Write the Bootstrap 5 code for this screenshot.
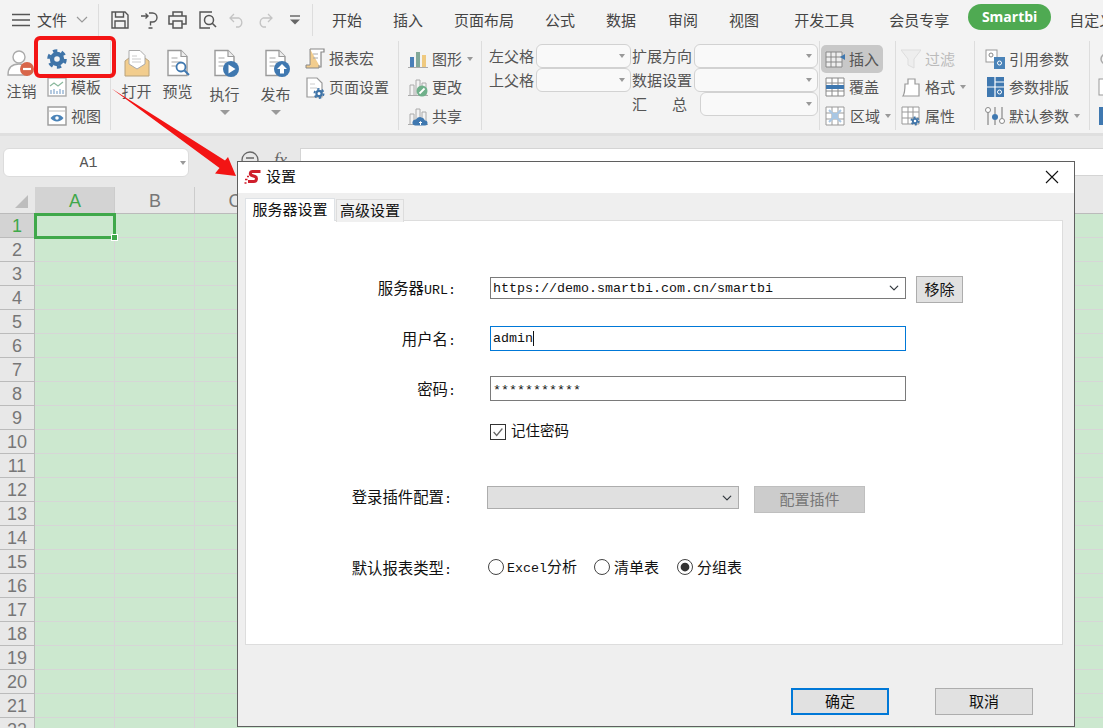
<!DOCTYPE html>
<html lang="zh-CN">
<head>
<meta charset="UTF-8" />
<title>Smartbi 设置</title>
<link rel="stylesheet" href="https://cdn.jsdelivr.net/npm/bootstrap@5.3.3/dist/css/bootstrap.min.css">
<style>
body { margin: 0; background: #e8e8e8; font-family: "Noto Sans CJK SC", "Liberation Sans", sans-serif; font-size: 15px; color: #555; }
.app { width: 1103px; height: 728px; overflow: hidden; position: relative; }
svg { display: block; flex: none; }

/* top tabs */
.topbar { height: 40px; background: #f3f3f3; white-space: nowrap; }
.menu-ico { margin-left: 12px; }
.file-lbl { margin-left: 7px; color: #444; }
.file-arrow { margin: 0 10px 0 9px; }
.vline { width: 1px; height: 32px; background: #ddd; flex: none; }
.qa { margin-left: 12px; margin-right: 12px; }
.q1 { margin-right: 11px; }
.q2 { margin-right: 10px; }
.q3 { margin-right: 11px; }
.q4 { margin-right: 12px; }
.q5 { margin-right: 12px; }
.q6 { margin-right: 17px; }
.tabitem { color: #444; flex: none; line-height: 40px; margin-left: 31px; }
.tabitem.t-first { margin-left: 19px; }
.tabitem.t-32 { margin-left: 32px; }
.tabitem.t-35 { margin-left: 35px; }
.tabitem.t-last { margin-left: 18px; }
.pill { width: 83px; height: 26px; border-radius: 13px; background: #4faa52; color: #fff; font-weight: 700; font-size: 14px; font-family: "Open Sans", sans-serif; display: flex; align-items: center; justify-content: center; flex: none; margin-left: 19px; margin-top: -7px; }

/* ribbon */
.ribbon { height: 93px; background: #f3f3f3; }
.strip { height: 3px; background: #dfdfdf; }
.rgroup { height: 89px; margin-top: 1px; border-right: 1px solid #ddd; flex: none; display: flex; }
.g-user { width: 111px; }
.g-file { width: 288px; }
.g-chart { width: 83px; padding-left: 9px; }
.g-form { width: 338px; padding: 3px 0 0 7px; }
.g-cell { width: 76px; padding-left: 5px; }
.g-fmt { width: 79px; padding-left: 5px; }
.g-param { width: 115px; padding-left: 10px; }
.g-rest { border: 0; margin-left: 8px; }
.rbig { display: flex; flex-direction: column; align-items: center; flex: none; padding-top: 8px; line-height: 20px; }
.rbig span { margin-top: 4px; }
.rbig.low span { margin-top: 7px; }
.b-logout { width: 43px; }
.b-logout svg { margin-left: -4px; }
.b-open { width: 47px; margin-left: 2px; }
.b-view { width: 35px; }
.b-run { width: 51px; margin-left: 4px; }
.b-pub { width: 51px; }
.rcol { display: flex; flex-direction: column; padding-top: 4px; flex: none; }
.rcol.c-user { margin-left: 4px; }
.rcol.c-macro { margin-left: 4px; padding-top: 3px; }
.ritem { height: 29px; display: flex; align-items: center; gap: 4px; white-space: nowrap; }
.ritem.on { background: #c8c8c8; border-radius: 5px; margin-left: -4px; padding-left: 4px; width: 62px; }
.ritem.off { color: #bbb; }
.ritem .wide { margin-left: 1px; }
.dn { width: 0; height: 0; border: 3.5px solid transparent; border-top: 4px solid #999; border-bottom: 0; flex: none; margin-left: 1px; }
.dn.mid { margin: 6px auto 0; border-width: 5px 5px 0; }
.frow { height: 24px; display: flex; align-items: center; white-space: nowrap; }
.rsel { height: 24px; border: 1px solid #d2d2d2; border-radius: 6px; background: #f9f9f9; display: flex; align-items: center; justify-content: flex-end; padding-right: 5px; flex: none; margin-left: 2px; }
.rs-a { width: 95px; }
.rs-b { width: 124px; }
.rs-c { width: 118px; margin-left: 13px; }
.col-right { margin-left: 1px; }
.sum-gap { margin-left: 25px; }

/* formula bar */
.fbar { height: 51px; background: #e8e8e8; padding-top: 12px; }
.namebox { width: 186px; height: 29px; margin-left: 3px; background: #fff; border: 1px solid #dcdcdc; border-radius: 6px; position: relative; text-align: center; font-family: "Liberation Mono", monospace; line-height: 29px; color: #555; flex: none; padding-right: 15px; font-size: 15px; }
.namebox .dn { position: absolute; right: 2px; top: 12px; }
.fx-circle { margin: 2px 0 0 51px; }
.fxtxt { font-family: "Liberation Serif", serif; font-style: italic; font-size: 18px; color: #666; margin-left: 14px; width: 20px; line-height: 24px; }
.finput { height: 28px; background: #fff; border: 1px solid #d4d4d4; border-right: 0; margin-left: 6px; flex: 1; }

/* sheet */
.shead { height: 27px; background: #e8e8e8; border-bottom: 1px solid #bbb; }
.corner { width: 35px; position: relative; flex: none; }
.corner::after { content: ""; position: absolute; left: 15px; top: 8px; border-style: solid; border-width: 0 0 13px 13px; border-color: transparent transparent #bdbdbd transparent; }
.chd { width: 80px; flex: none; text-align: center; border-right: 1px solid #ccc; font-family: "Liberation Sans", sans-serif; font-size: 18px; line-height: 28px; color: #777; padding-left: 1px; }
.chd.sel { background: #d3d3d3; color: #3fa84a; }
.srow { height: 24px; }
.rhd { width: 35px; flex: none; background: #e8e8e8; border-right: 1px solid #bbb; border-bottom: 1px solid #bbb; text-align: center; font-family: "Liberation Sans", sans-serif; font-size: 18px; line-height: 25px; color: #777; }
.rhd.sel { background: #d3d3d3; color: #3fa84a; }
.cel { width: 80px; flex: none; background: #cce8cf; border-right: 1px solid #d6d6d6; border-bottom: 1px solid #d6d6d6; }
.cel.sel { position: relative; outline: 3px solid #3fa84a; outline-offset: -2px; }
.cel.sel::after { content: ""; position: absolute; right: -4px; bottom: -4px; width: 7px; height: 7px; background: #3fa84a; border: 1px solid #fff; }

/* annotations */
.mark-box { position: absolute; left: 34px; top: 36px; width: 82px; height: 42px; border: 4px solid #f31414; border-radius: 6px; }
.mark-arrow { position: absolute; left: 0; top: 0; }

/* dialog */
.dlg { position: absolute; left: 237px; top: 161px; width: 838px; height: 566px; border: 1px solid #5f5f5f; background: #efefef; color: #111; font-size: 14.5px; display: flex; flex-direction: column; }
.dlg-title { height: 31px; background: #fff; flex: none; padding: 0 0 2px 6px; gap: 4px; color: #111; font-size: 15px; }
.dlg-close { margin-left: auto; margin-right: 15px; }
.dlg-body { padding: 5px 11px 0 7px; }
.dlg .nav-tabs { border: 0; height: 22px; flex-wrap: nowrap; }
.dlg .nav-link { height: 23px; line-height: 19px; border: 1px solid #ddd; border-bottom: 0; border-radius: 0; background: #f0f0f0; color: #111; font-size: 15px; margin: 1px 0 0 0; }
.dlg .nav-link.active { width: 90px; height: 23px; margin: 0 1px 0 0; padding: 0; text-align: center; line-height: 20px; background: #fff; color: #111; position: relative; z-index: 1; }
.dlg .nav-link.next { width: 68px; padding: 0; text-align: center; }
.panel-box { height: 425px; background: #fff; border: 1px solid #ddd; padding-top: 56px; }
.lbl { width: 210px; height: 20px; margin-right: 34px; text-align: right; flex: none; font-size: 15.4px; line-height: 20px; margin-bottom: 2px; }
.lbl.b { width: 206px; margin-right: 35px; }
.lat { font-family: "Liberation Mono", monospace; font-size: 13.33px; }
.dlg .form-control, .dlg .form-select { border-radius: 0; box-shadow: none; padding: 0 0 0 2px; font-family: "Liberation Mono", monospace; font-size: 13.33px; color: #111; border: 1px solid #7a7a7a; flex: none; }
.dlg .form-select { width: 416px; height: 22px; background-size: 10px 10px; background-position: right 6px center; padding: 1px 20px 0 2px; }
.dlg .form-control { width: 416px; height: 25px; display: flex; align-items: center; }
.dlg input.form-control { padding-top: 3px; }
.dlg .form-control.focused { border-color: #0078d7; }
.tcaret { width: 1px; height: 15px; background: #111; }
.dlg .form-select:disabled { width: 252px; height: 23px; background-color: #e0e0e0; border-color: #adadad; }
.wbtn { border-radius: 0; padding: 0 0 3px; background: #e1e1e1; border: 1px solid #adadad; color: #111; font-size: 15px; line-height: 1; flex: none; }
.wbtn.rm { width: 47px; height: 27px; margin-left: 10px; margin-top: -1px; }
.wbtn.cfg { width: 111px; height: 27px; margin-left: 15px; background: #ccc; border-color: #bfbfbf; color: #777; }
.wbtn.act { width: 98px; height: 27px; }
.wbtn.pri { border: 2px solid #0078d7; }
.dlg .form-check-input { float: none; margin: 0; width: 16px; height: 16px; border: 1px solid #333; border-radius: 0; box-shadow: none; background-color: #fff; flex: none; }
.dlg .form-check-input:checked[type=checkbox] { background-image: url("data:image/svg+xml,%3Csvg xmlns='http://www.w3.org/2000/svg' viewBox='0 0 16 16'%3E%3Cpath d='M3 8l3.5 4L13 4' fill='none' stroke='%23666' stroke-width='1.4'/%3E%3C/svg%3E"); }
.dlg .form-check-input[type=radio] { border-radius: 50%; border-color: #444; }
.dlg .form-check-input:checked[type=radio] { background-image: url("data:image/svg+xml,%3Csvg xmlns='http://www.w3.org/2000/svg' viewBox='0 0 16 16'%3E%3Ccircle cx='8' cy='8' r='5' fill='%23333'/%3E%3C/svg%3E"); }
.m-user { margin-top: 23px; }
.m-pwd { margin-top: 25px; }
.m-chk { margin-top: 23px; padding-left: 244px; }
.m-plugin { margin-top: 46px; }
.m-type { margin-top: 42px; }
.m-type .lbl { margin-bottom: 0; }
.chk-lbl { margin: 0 0 4px 5px; line-height: 12px; font-size: 14.5px; }
.radio-set { margin-left: 1px; font-size: 15px; }
.radio-txt { margin-left: 3px; margin-right: 17px; white-space: nowrap; }
.radio-txt.r2 { margin-left: 4px; margin-right: 18px; }
.radio-txt.r3 { margin-left: 4px; }
.dlg-foot { margin-top: 43px; margin-right: 30px; gap: 46px; }
</style>
</head>
<body>
<svg width="0" height="0" class="position-absolute">
  <defs>
    <symbol id="doc" viewBox="0 0 28 28"><path d="M4 1.500h13l6 6v19H4z" fill="#fff" stroke="#9a9a9a" stroke-width="1.400"/><path d="M17 1.500v6h6" fill="#eee" stroke="#9a9a9a" stroke-width="1.200"/><path d="M7.500 9h6M7.500 13h9M7.500 17h5" stroke="#c4c4c4" stroke-width="1.300"/></symbol>
    <symbol id="gearb" viewBox="0 0 20 20"><circle cx="10" cy="10" r="8.200" fill="none" stroke="#3f74a8" stroke-width="3.200" stroke-dasharray="4.300 4.300"/><circle cx="10" cy="10" r="5" fill="none" stroke="#3f74a8" stroke-width="4.400"/></symbol>
  </defs>
</svg>

<div class="app">
  <!-- top tabs -->
  <div class="topbar d-flex align-items-center">
    <svg class="menu-ico" width="18" height="14" viewBox="0 0 18 14"><path d="M0 1.500h18M0 7h18M0 12.500h18" stroke="#555" stroke-width="1.300"/></svg>
    <span class="file-lbl">文件</span>
    <svg class="file-arrow" width="12" height="8" viewBox="0 0 12 8"><path d="M1 1l5 5 5-5" fill="none" stroke="#999" stroke-width="1.200"/></svg>
    <div class="vline"></div>
    <div class="qa d-flex align-items-center">
      <svg class="q1" width="18" height="18" viewBox="0 0 18 18"><path d="M1 1h13l3 3v13H1z M4.500 1v5h8V1 M4 17v-7h10v7" fill="none" stroke="#555" stroke-width="1.400"/></svg>
      <svg class="q2" width="18" height="18" viewBox="0 0 18 18"><path d="M1 5h7M5.500 2.500L8 5 5.500 7.500M9 2h3.500a4.500 4.500 0 0 1 0 9H10.500v3.500M8.500 17h4" fill="none" stroke="#555" stroke-width="1.400"/></svg>
      <svg class="q3" width="19" height="18" viewBox="0 0 19 18"><path d="M5 5V1h9v4M5 13H1V5h17v8h-4M5 10h9v7H5z" fill="none" stroke="#555" stroke-width="1.500"/></svg>
      <svg class="q4" width="19" height="18" viewBox="0 0 19 18"><path d="M14 1H2v16h10" fill="none" stroke="#555" stroke-width="1.400"/><circle cx="11" cy="9" r="4.500" fill="#f3f3f3" stroke="#555" stroke-width="1.500"/><path d="M14 12l4 4" stroke="#555" stroke-width="1.600"/></svg>
      <svg class="q5" width="16" height="15" viewBox="0 0 16 15"><path d="M5 1L1 5l4 4M1 5h9a5 5 0 0 1 0 9H7" fill="none" stroke="#c4c4c4" stroke-width="1.300"/></svg>
      <svg class="q6" width="16" height="15" viewBox="0 0 16 15"><path d="M11 1l4 4-4 4M15 5H6a5 5 0 0 0 0 9h3" fill="none" stroke="#c4c4c4" stroke-width="1.300"/></svg>
      <svg width="10" height="10" viewBox="0 0 10 10"><path d="M0 1h10" stroke="#555" stroke-width="1.300"/><path d="M0 4.500h10L5 9.500z" fill="#666"/></svg>
    </div>
    <div class="vline"></div>
    <span class="tabitem t-first">开始</span>
    <span class="tabitem">插入</span>
    <span class="tabitem">页面布局</span>
    <span class="tabitem">公式</span>
    <span class="tabitem">数据</span>
    <span class="tabitem t-32">审阅</span>
    <span class="tabitem">视图</span>
    <span class="tabitem t-35">开发工具</span>
    <span class="tabitem t-35">会员专享</span>
    <span class="pill">Smartbi</span>
    <span class="tabitem t-last">自定义</span>
  </div>

  <!-- ribbon -->
  <div class="ribbon d-flex">
    <div class="rgroup g-user">
      <div class="rbig b-logout">
        <svg width="28" height="28" viewBox="0 0 28 28"><circle cx="13" cy="8" r="6" fill="#fff" stroke="#aaa" stroke-width="1.400"/><path d="M2 26c0-8 5-11 11-11s8 3 8 11z" fill="#fff" stroke="#aaa" stroke-width="1.400"/><circle cx="21" cy="20" r="7" fill="#d8664a"/><path d="M17 20h8" stroke="#fff" stroke-width="2.200"/></svg>
        <span>注销</span>
      </div>
      <div class="rcol c-user">
        <div class="ritem"><svg width="20" height="20"><use href="#gearb"/></svg>设置</div>
        <div class="ritem"><svg width="20" height="20" viewBox="0 0 20 20"><rect x="1" y="1" width="18" height="18" fill="#fff" stroke="#aaa" stroke-width="1.400"/><path d="M3 9l4-3 4 3 5-4" fill="none" stroke="#8bb99e" stroke-width="1.200"/><path d="M4 17v-4M7 17v-5M10 17v-3M13 17v-5M16 17v-4" stroke="#9bb8d6" stroke-width="1.500"/></svg>模板</div>
        <div class="ritem"><svg width="20" height="20" viewBox="0 0 20 20"><rect x="1" y="1" width="18" height="18" fill="#fff" stroke="#999" stroke-width="1.400"/><path d="M1 5h18" stroke="#bbb"/><path d="M3.500 12c3-4.500 10-4.500 13 0-3 4.500-10 4.500-13 0z" fill="#4a83b8"/><circle cx="10" cy="12" r="1.800" fill="#fff"/></svg>视图</div>
      </div>
    </div>

    <div class="rgroup g-file">
      <div class="rbig b-open">
        <svg width="26" height="28" viewBox="0 0 26 28"><path d="M1 12L13 3l12 9v15H1z" fill="#f2cd8e" stroke="#b8a27c"/><path d="M5 15V1.500h11l5 5V15l-8 5z" fill="#fff" stroke="#aaa"/><path d="M8 7h5M8 10h9M8 13h9" stroke="#ccc" stroke-width="1.200"/></svg>
        <span>打开</span>
      </div>
      <div class="rbig b-view">
        <svg width="28" height="28" viewBox="0 0 28 28"><use href="#doc"/><circle cx="17" cy="18" r="4.500" fill="#fff" stroke="#3f78b0" stroke-width="1.800"/><path d="M20.500 21.500l4.500 4.500" stroke="#3f78b0" stroke-width="2"/></svg>
        <span>预览</span>
      </div>
      <div class="rbig low b-run">
        <svg width="28" height="28" viewBox="0 0 28 28"><use href="#doc"/><circle cx="20" cy="20" r="8" fill="#3f78b0"/><path d="M17.500 15.500l7 4.500-7 4.500z" fill="#fff"/></svg>
        <span>执行</span><i class="dn mid"></i>
      </div>
      <div class="rbig low b-pub">
        <svg width="28" height="28" viewBox="0 0 28 28"><use href="#doc"/><circle cx="20" cy="20" r="8" fill="#3f78b0"/><path d="M20 15l5 5h-3v4.500h-4V20h-3z" fill="#fff"/></svg>
        <span>发布</span><i class="dn mid"></i>
      </div>
      <div class="rcol c-macro">
        <div class="ritem"><svg width="20" height="22" viewBox="0 0 20 22"><path d="M5 1h14v3h-3v15H3" fill="#fff" stroke="#888" stroke-width="1.200"/><path d="M5 1v16H1v3h13v-3" fill="#f2cd8e" stroke="#888"/><path d="M8 6h5M8 10h5" stroke="#aaa"/></svg>报表宏</div>
        <div class="ritem"><svg width="20" height="22" viewBox="0 0 20 22"><path d="M2 1h10l5 5v14H2z" fill="#fff" stroke="#999" stroke-width="1.200"/><path d="M5 7h5M5 11h7" stroke="#ccc"/><circle cx="14" cy="16.500" r="4.600" fill="none" stroke="#3f74a8" stroke-width="1.800" stroke-dasharray="2.400 2.400"/><circle cx="14" cy="16.500" r="2.600" fill="none" stroke="#3f74a8" stroke-width="2.200"/></svg>页面设置</div>
      </div>
    </div>

    <div class="rgroup g-chart">
      <div class="rcol">
        <div class="ritem"><svg width="20" height="20" viewBox="0 0 20 20"><path d="M0 18.500h20" stroke="#aaa"/><rect x="2" y="8" width="4" height="10" fill="#4a7fb8"/><rect x="8" y="3" width="4" height="15" fill="#82a898"/><rect x="14" y="6" width="4" height="12" fill="#efc97f"/></svg>图形<i class="dn"></i></div>
        <div class="ritem"><svg width="20" height="20" viewBox="0 0 20 20"><path d="M0 18.500h20M2 18V8h4v10M8 18V3h4v15M14 18V6h4v12" fill="none" stroke="#aaa"/><circle cx="14" cy="14" r="5.500" fill="#6fb08a"/><path d="M11.500 16.500l5-5" stroke="#fff" stroke-width="1.800"/></svg>更改</div>
        <div class="ritem"><svg width="20" height="20" viewBox="0 0 20 20"><path d="M0 18.500h20M2 18V8h4v10M8 18V3h4v15M14 18V6h4v12" fill="none" stroke="#aaa"/><path d="M7 19.500a3 3 0 0 1 1-6 5 5 0 0 1 9 1 2.500 2.500 0 0 1 0 5z" fill="#3f78b0"/><path d="M12.500 19v-3M11 17l1.500-1.500L14 17" fill="none" stroke="#fff"/></svg>共享</div>
      </div>
    </div>

    <div class="rgroup g-form">
      <div>
        <div class="frow">左父格<div class="rsel rs-a"><i class="dn"></i></div></div>
        <div class="frow">上父格<div class="rsel rs-a"><i class="dn"></i></div></div>
      </div>
      <div class="col-right">
        <div class="frow">扩展方向<div class="rsel rs-b"><i class="dn"></i></div></div>
        <div class="frow">数据设置<div class="rsel rs-b"><i class="dn"></i></div></div>
        <div class="frow"><span>汇</span><span class="sum-gap">总</span><div class="rsel rs-c"><i class="dn"></i></div></div>
      </div>
    </div>

    <div class="rgroup g-cell">
      <div class="rcol">
        <div class="ritem on"><svg width="20" height="20" viewBox="0 0 20 20"><path d="M1 3h16v15H1zM1 8h16M1 13h16M6 3v15M11 3v15" fill="#eee" stroke="#888"/><path d="M15 8l5-3v6z" fill="#3f78b0"/></svg>插入</div>
        <div class="ritem"><svg width="20" height="20" viewBox="0 0 20 20"><path d="M1 1h18v18H1zM1 6h18M1 14h18M7 1v18M13 1v18" fill="#fff" stroke="#888"/><rect x="1" y="8" width="18" height="4" fill="#3f78b0"/></svg>覆盖</div>
        <div class="ritem"><svg width="20" height="20" viewBox="0 0 20 20"><path d="M1 1h18v18H1zM1 7h18M1 13h18M7 1v18M13 1v18" fill="#fff" stroke="#999"/><path d="M7 7h6v6H7z" fill="#a9c7e4"/><path d="M4 4l12 12M16 4L4 16" stroke="#a9c7e4" stroke-width="2"/></svg><span class="wide">区域</span><i class="dn"></i></div>
      </div>
    </div>

    <div class="rgroup g-fmt">
      <div class="rcol">
        <div class="ritem off"><svg width="20" height="20" viewBox="0 0 20 20"><path d="M0 1h20l-7 9v9l-6-3v-6z" fill="#eee" stroke="#ddd"/></svg>过滤</div>
        <div class="ritem"><svg width="20" height="20" viewBox="0 0 20 20"><path d="M7 7V2h7v5h4v12H2c2-3 2-8 2-12z" fill="#fff" stroke="#999" stroke-width="1.200"/></svg>格式<i class="dn"></i></div>
        <div class="ritem"><svg width="20" height="20" viewBox="0 0 20 20"><path d="M1 1h17v17H1zM1 6h17M1 12h17M7 1v17M12 1v17" fill="#fff" stroke="#999"/><circle cx="14" cy="15" r="3.800" fill="none" stroke="#3f74a8" stroke-width="1.500" stroke-dasharray="2 2"/><circle cx="14" cy="15" r="2.200" fill="none" stroke="#3f74a8" stroke-width="1.800"/></svg>属性</div>
      </div>
    </div>

    <div class="rgroup g-param">
      <div class="rcol">
        <div class="ritem"><svg width="20" height="20" viewBox="0 0 20 20"><rect x="1" y="1" width="11" height="12" fill="#fff" stroke="#999"/><rect x="9" y="8" width="11" height="12" fill="#4a83b8"/><circle cx="6" cy="6" r="2" fill="none" stroke="#888"/><circle cx="14.500" cy="14" r="2" fill="none" stroke="#fff"/></svg>引用参数</div>
        <div class="ritem"><svg width="20" height="20" viewBox="0 0 20 20"><rect x="2" width="17" height="20" fill="#3f78b0"/><path d="M10 0v10M10 5h9M2 10h17M10 10v10" stroke="#fff" stroke-width="1.200"/><circle cx="14.500" cy="15" r="2" fill="none" stroke="#fff"/></svg>参数排版</div>
        <div class="ritem"><svg width="20" height="20" viewBox="0 0 20 20"><path d="M3 6v13M10 1v7M10 14v5M17 1v11" stroke="#888" stroke-width="1.200"/><circle cx="3" cy="4" r="2.500" fill="#fff" stroke="#888"/><circle cx="10" cy="11" r="3" fill="#3f78b0"/><circle cx="17" cy="15" r="2.500" fill="#fff" stroke="#888"/></svg>默认参数<i class="dn"></i></div>
      </div>
    </div>

    <div class="rgroup g-rest">
      <div class="rcol">
        <div class="ritem"><svg width="14" height="20" viewBox="0 0 14 20"><circle cx="8" cy="10" r="5" fill="none" stroke="#aaa" stroke-width="1.500"/></svg></div>
        <div class="ritem"><svg width="14" height="20" viewBox="0 0 14 20"><rect x="1" y="2" width="12" height="16" fill="#fff" stroke="#999"/></svg></div>
        <div class="ritem"><svg width="14" height="20" viewBox="0 0 14 20"><rect x="1" y="1" width="13" height="18" fill="#3f78b0"/></svg></div>
      </div>
    </div>
  </div>
  <div class="strip"></div>

  <!-- formula bar -->
  <div class="fbar d-flex">
    <div class="namebox">A1<i class="dn"></i></div>
    <svg class="fx-circle" width="20" height="20" viewBox="0 0 20 20"><circle cx="10" cy="10" r="8" fill="none" stroke="#666" stroke-width="1.300"/><path d="M6 8h8M6 12h8" stroke="#666" stroke-width="1.300"/></svg>
    <span class="fxtxt">fx</span>
    <div class="finput"></div>
  </div>

  <!-- sheet -->
  <div class="shead d-flex" id="sheetHead"><div class="corner"></div></div>
  <div id="sheetRows"></div>

  <!-- annotation -->
  <div class="mark-box"></div>
  <svg class="mark-arrow" width="300" height="200" viewBox="0 0 300 200"><path d="M111.500 88.500L225 160.500 228 157 236 176 215 173.500 219.500 168z" fill="#f31414"/></svg>

  <!-- dialog -->
  <div class="dlg">
    <div class="dlg-title d-flex align-items-center">
      <svg width="18" height="18" viewBox="0 0 18 18"><path d="M16.500 3.500H8.500C6 3.500 5.500 7 8 7.500L11 8.500C13.500 9.500 12.500 13.500 10 13.500H4" fill="none" stroke="#cf1f2c" stroke-width="3"/><path d="M1 11.500h2.500M3 8.500h2M0.500 15h2" stroke="#cf1f2c" stroke-width="1.600"/></svg>
      <span>设置</span>
      <svg class="dlg-close" width="14" height="14" viewBox="0 0 14 14"><path d="M1 1l12 12M13 1L1 13" stroke="#111" stroke-width="1.100"/></svg>
    </div>
    <div class="dlg-body">
      <ul class="nav nav-tabs">
        <li class="nav-item"><a class="nav-link active" href="#">服务器设置</a></li>
        <li class="nav-item"><a class="nav-link next" href="#">高级设置</a></li>
      </ul>
      <div class="panel-box">
        <div class="d-flex align-items-start">
          <div class="lbl">服务器<span class="lat">URL:</span></div>
          <select class="form-select"><option>https://demo.smartbi.com.cn/smartbi</option></select>
          <button class="btn wbtn rm" type="button">移除</button>
        </div>
        <div class="d-flex align-items-center m-user">
          <div class="lbl">用户名<span class="lat">:</span></div>
          <div class="form-control focused">admin<span class="tcaret"></span></div>
        </div>
        <div class="d-flex align-items-center m-pwd">
          <div class="lbl">密码<span class="lat">:</span></div>
          <input class="form-control" type="text" value="***********">
        </div>
        <div class="d-flex align-items-center m-chk">
          <input class="form-check-input" type="checkbox" id="rememberPwd" checked>
          <label class="chk-lbl" for="rememberPwd">记住密码</label>
        </div>
        <div class="d-flex align-items-start m-plugin">
          <div class="lbl b">登录插件配置<span class="lat">:</span></div>
          <select class="form-select" disabled><option></option></select>
          <button class="btn wbtn cfg" type="button">配置插件</button>
        </div>
        <div class="d-flex align-items-center m-type">
          <div class="lbl b">默认报表类型<span class="lat">:</span></div>
          <div class="d-flex align-items-center radio-set">
            <input class="form-check-input" type="radio" name="rptType" id="rptExcel">
            <label class="radio-txt" for="rptExcel"><span class="lat">Excel</span>分析</label>
            <input class="form-check-input" type="radio" name="rptType" id="rptList">
            <label class="radio-txt r2" for="rptList">清单表</label>
            <input class="form-check-input" type="radio" name="rptType" id="rptGroup" checked>
            <label class="radio-txt r3" for="rptGroup">分组表</label>
          </div>
        </div>
      </div>
      <div class="dlg-foot d-flex justify-content-end">
        <button class="btn wbtn act pri" type="button">确定</button>
        <button class="btn wbtn act" type="button">取消</button>
      </div>
    </div>
  </div>
</div>

<script>
// only A-C stick out from under the dialog, the rest stay unlabelled
const cols = 'ABCDEFGHIJKLMN'.split('');
const head = document.getElementById('sheetHead');
cols.forEach((c, i) => {
  head.insertAdjacentHTML('beforeend', `<div class="chd${i === 0 ? ' sel' : ''}">${i < 3 ? c : ''}</div>`);
});
const rows = document.getElementById('sheetRows');
for (let r = 1; r <= 22; r++) {
  const cells = cols.map((c, i) => `<div class="cel${r === 1 && i === 0 ? ' sel' : ''}"></div>`).join('');
  rows.insertAdjacentHTML('beforeend', `<div class="srow d-flex"><div class="rhd${r === 1 ? ' sel' : ''}">${r}</div>${cells}</div>`);
}
</script>
<script src="https://cdn.jsdelivr.net/npm/bootstrap@5.3.3/dist/js/bootstrap.bundle.min.js"></script>
</body>
</html>
